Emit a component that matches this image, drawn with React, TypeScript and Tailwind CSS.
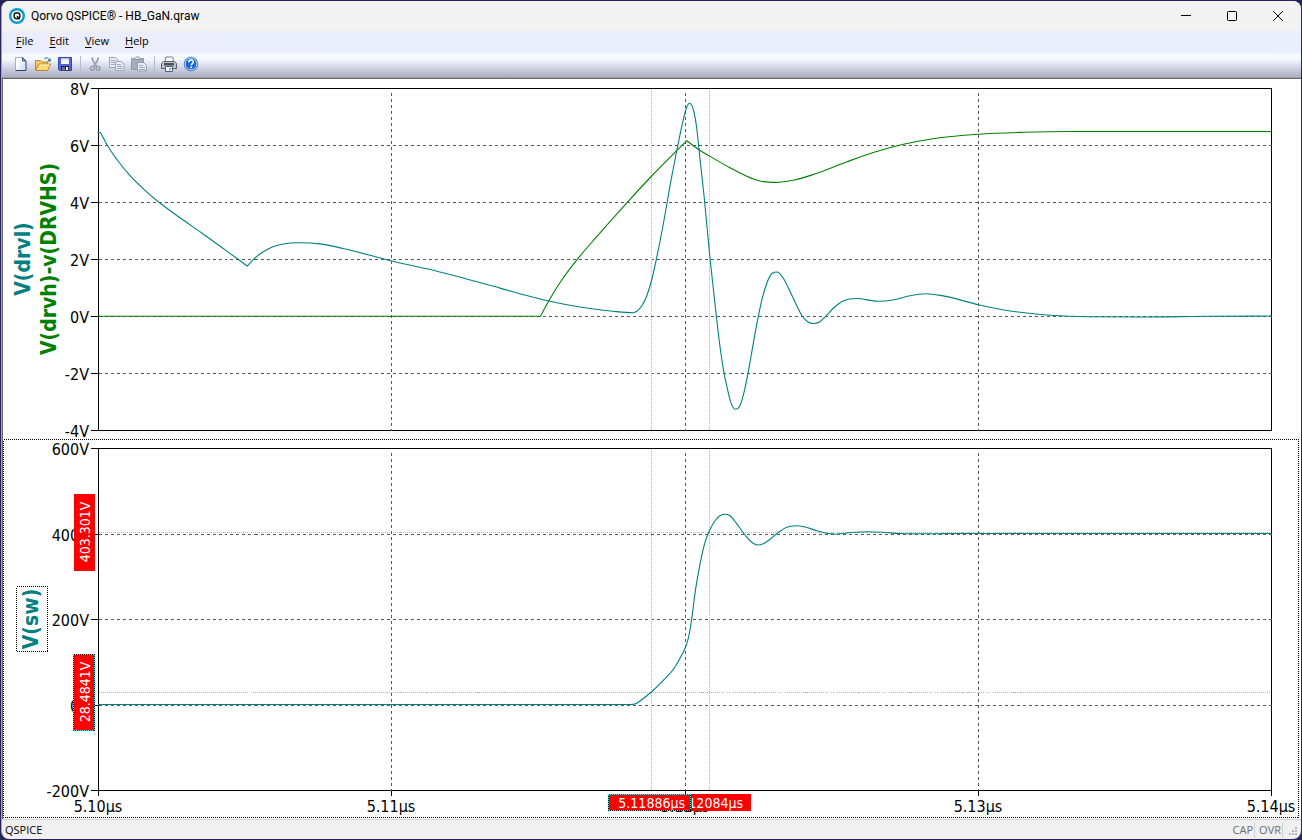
import React from "react";

type Point = [number, number];

/* Smooth path through a run of samples, with tangents limited so that it never overshoots. */
function curve(points: Point[], start = "M"): string {
  const n = points.length;
  const slope: number[] = [];
  for (let i = 0; i < n - 1; i++) {
    slope.push((points[i + 1][1] - points[i][1]) / (points[i + 1][0] - points[i][0]));
  }
  const tangent = points.map((_, i) => {
    if (i === 0) return slope[0];
    if (i === n - 1) return slope[n - 2];
    const a = slope[i - 1];
    const b = slope[i];
    if (a * b <= 0) return 0;
    const h0 = points[i][0] - points[i - 1][0];
    const h1 = points[i + 1][0] - points[i][0];
    const t = (a * h1 + b * h0) / (h0 + h1);
    const limit = 3 * Math.min(Math.abs(a), Math.abs(b));
    return Math.sign(t) * Math.min(Math.abs(t), limit);
  });
  let d = `${start}${points[0][0]} ${points[0][1]}`;
  for (let i = 0; i < n - 1; i++) {
    const [x0, y0] = points[i];
    const [x1, y1] = points[i + 1];
    const h = (x1 - x0) / 3;
    d += `C${x0 + h} ${y0 + tangent[i] * h} ${x1 - h} ${y1 - tangent[i + 1] * h} ${x1} ${y1}`;
  }
  return d;
}

const DRVL_DECAY: Point[] = [
  [100.7, 132.7], [107.3, 145.3], [117.3, 160], [130, 175.7], [145, 190.3], [159, 202.3],
  [180, 217.8], [201.7, 233], [236.7, 258.3], [247.3, 266],
];
const DRVL_RING: Point[] = [
  [247.3, 266], [253.3, 259.7], [261.7, 252.7], [271.7, 247.2], [283.3, 244], [298.3, 242.7],
  [320, 243.9], [343.3, 248.5], [391.7, 261], [438, 271.5], [488, 284.8], [520, 293.7],
  [548.7, 301], [580, 307], [613, 311.3], [633.3, 312.7], [636.7, 311.3], [641.7, 306],
  [646.7, 296], [651.7, 280], [656.7, 257.7], [663.3, 224], [671.7, 176.7], [676.7, 151],
  [682.7, 122.3], [686.7, 107.3], [689.5, 103.2], [693.7, 111], [696.7, 127.7], [699, 149.7],
  [704.3, 198.3], [710, 258.3], [716.3, 315.7], [720, 346.7], [724, 373], [727.3, 388.3],
  [730.3, 400.7], [735.3, 409.3], [739, 407.3], [744, 392.3], [748, 373.3], [753.3, 343.3],
  [758.3, 316.3], [762.7, 296.7], [767, 282.7], [772.3, 273.3], [777.3, 272], [784.2, 279.7],
  [790.4, 292.3], [796.3, 304.7], [802.2, 316], [807.7, 321.7], [813.6, 323.5], [819.5, 322],
  [825.7, 316.3], [833.6, 308], [841.2, 302], [849.2, 299], [856.8, 298.5], [877.5, 301.3],
  [893, 300], [908.6, 296], [925.9, 293.7], [943.2, 295.9], [978.5, 304.7], [1008.9, 310.7],
  [1053.8, 315.5], [1088.4, 316.8], [1140, 317], [1209, 316.3], [1271.5, 316],
];
const DRVH_RISE: Point[] = [
  [540.5, 316.2], [548.7, 301], [561.7, 280], [577.3, 259.3], [596.7, 236.7], [627.3, 202.3],
  [651.7, 176], [676.7, 150.7], [686.7, 140.7],
];
const DRVH_SETTLE: Point[] = [
  [686.7, 140.7], [699, 149.8], [709.3, 155.9], [730, 167.7], [746.7, 176.3], [760, 181],
  [774.5, 182.4], [794.6, 180], [815.3, 173.8], [846.4, 162], [874, 152.3], [903.4, 144.3],
  [932.8, 138.7], [978.5, 134.2], [1022.7, 132.3], [1071, 131.5], [1271.5, 131.5],
];
const SW: Point[] = [
  [98, 704.5], [630, 704.5], [635, 704], [641.7, 699.7], [651.3, 692], [663.3, 680.3],
  [675, 667], [681.7, 655], [685.7, 646.7], [688.7, 636.7], [691.7, 619], [695, 593.3],
  [700, 564.3], [704.7, 543.3], [709.3, 531], [715, 520.7], [720, 515.7], [725, 514.3],
  [730, 515.7], [736.7, 523.7], [745, 535], [751.7, 542.3], [757.7, 545], [763.3, 543.7],
  [770, 539.3], [779.3, 531.7], [786.7, 527.3], [796, 525.7], [805, 527], [816.7, 530.7],
  [826.7, 533.3], [835, 534], [846.7, 533], [866.7, 531.7], [883, 532.3], [900, 533.5],
  [930, 533.8], [960, 533.5], [1271.5, 533.5],
];

const TIME_GRID = [391, 685, 978];
const CURSORS = [651, 709];
const AXIS_TEXT = "fill-black text-[16px] font-['DejaVu_Sans_Condensed','DejaVu_Sans',sans-serif]";
const TRACE_TEXT = "text-[21px] font-bold font-['DejaVu_Sans_Condensed','DejaVu_Sans',sans-serif]";
const CURSOR_TEXT = "fill-white text-[14px] font-['DejaVu_Sans_Condensed','DejaVu_Sans',sans-serif]";

interface FrameProps {
  top: number;
  bottom: number;
  ticks: { y: number; label: string }[];
}

function PlotFrame({ top, bottom, ticks }: FrameProps) {
  return (
    <>
      <g transform="translate(0.5 0.5)" fill="none" shapeRendering="crispEdges">
        <rect x="98" y={top} width="1173" height={bottom - top} stroke="#000" />
        {ticks.map((t) => (
          <path key={t.label} d={`M90 ${t.y}H98`} stroke="#000" />
        ))}
        {ticks.slice(1, -1).map((t) => (
          <path key={t.label} d={`M98 ${t.y}H1271`} stroke="#585858" strokeDasharray="3 3" />
        ))}
        {TIME_GRID.map((x) => (
          <path key={x} d={`M${x} ${top + 4}V${bottom}`} stroke="#585858" strokeDasharray="3 3" />
        ))}
        {CURSORS.map((x) => (
          <path key={x} d={`M${x} ${top}V${bottom}`} stroke="#b4b4b4" strokeDasharray="1 1" />
        ))}
      </g>
      {ticks.map((t) => (
        <text key={t.label} x="89" y={t.y + 7} textAnchor="end" className={AXIS_TEXT}>
          {t.label}
        </text>
      ))}
    </>
  );
}

function DrivePane() {
  return (
    <svg
      viewBox="3 79 1297 360"
      className="block h-auto w-full overflow-visible"
      role="img"
      aria-label="Gate drive voltages"
    >
      <PlotFrame
        top={88}
        bottom={430}
        ticks={[
          { y: 88, label: "8V" },
          { y: 145, label: "6V" },
          { y: 202, label: "4V" },
          { y: 259, label: "2V" },
          { y: 316, label: "0V" },
          { y: 373, label: "-2V" },
          { y: 430, label: "-4V" },
        ]}
      />
      <path
        d={`M98 316.2${curve(DRVH_RISE, "L")}${curve(DRVH_SETTLE, "L")}`}
        fill="none"
        stroke="#008000"
        strokeWidth="1.1"
      />
      <path
        d={`M97.5 132.5${curve(DRVL_DECAY, "L")}${curve(DRVL_RING, "L")}`}
        fill="none"
        stroke="#008080"
        strokeWidth="1.1"
      />
      <text transform="translate(30 259) rotate(-90)" textAnchor="middle" fill="#008080" className={TRACE_TEXT}>
        V(drvl)
      </text>
      <text transform="translate(56 259) rotate(-90)" textAnchor="middle" fill="#008000" className={TRACE_TEXT}>
        V(drvh)-v(DRVHS)
      </text>
    </svg>
  );
}

function FocusRect({ x, y, width, height }: { x: number; y: number; width: number; height: number }) {
  return (
    <g transform="translate(0.5 0.5)" fill="none" shapeRendering="crispEdges">
      <rect x={x} y={y} width={width} height={height} stroke="#00ffff" />
      <rect x={x} y={y} width={width} height={height} stroke="#000" strokeDasharray="1 1" />
    </g>
  );
}

function SwitchPane() {
  return (
    <svg
      viewBox="3 439 1297 380"
      className="block h-auto w-full overflow-visible"
      role="img"
      aria-label="Switch node voltage"
    >
      <g transform="translate(0.5 0.5)" fill="none" shapeRendering="crispEdges" stroke="#000">
        <rect x="3" y="439" width="1295" height="378" strokeDasharray="1 1" />
        <rect x="16" y="586" width="31" height="65" strokeDasharray="1 1" />
        {[98, ...TIME_GRID, 1271].map((x) => (
          <path key={x} d={`M${x} 790V795`} />
        ))}
        <path d="M98 532H1271M98 692H1271" stroke="#b4b4b4" strokeDasharray="1 1" />
      </g>
      <PlotFrame
        top={448}
        bottom={790}
        ticks={[
          { y: 448, label: "600V" },
          { y: 534, label: "400V" },
          { y: 619, label: "200V" },
          { y: 705, label: "0V" },
          { y: 790, label: "-200V" },
        ]}
      />
      {["5.10µs", "5.11µs", "5.12µs", "5.13µs", "5.14µs"].map((label, i) => (
        <text key={label} x={[98, 391, 685, 978, 1271][i]} y="812" textAnchor="middle" className={AXIS_TEXT}>
          {label}
        </text>
      ))}
      <path d={curve(SW)} fill="none" stroke="#008080" strokeWidth="1.1" />
      <text transform="translate(38 619) rotate(-90)" textAnchor="middle" fill="#008080" className={TRACE_TEXT}>
        V(sw)
      </text>

      <rect x="74" y="494" width="21" height="77" fill="#ff0000" />
      <text transform="translate(90 532) rotate(-90)" textAnchor="middle" className={CURSOR_TEXT}>
        403.301V
      </text>
      <rect x="74" y="654" width="21" height="77" fill="#ff0000" />
      <text transform="translate(90 692) rotate(-90)" textAnchor="middle" className={CURSOR_TEXT}>
        28.4841V
      </text>
      <FocusRect x={73} y={654} width={21} height={76} />

      <rect x="668" y="794" width="83" height="17" fill="#ff0000" />
      <text x="743" y="808" textAnchor="end" className={CURSOR_TEXT}>
        5.12084µs
      </text>
      <rect x="608" y="794" width="84" height="17" fill="#ff0000" />
      <text x="685" y="808" textAnchor="end" className={CURSOR_TEXT}>
        5.11886µs
      </text>
      <FocusRect x={608} y={794} width={82} height={16} />
    </svg>
  );
}

function AppLogo() {
  return (
    <svg viewBox="0 0 16 16" className="size-4" aria-hidden="true">
      <circle cx="8" cy="8" r="8" fill="#0a9bd0" />
      <circle cx="8" cy="8" r="5.6" fill="#fff" />
      <circle cx="8" cy="7.8" r="3" fill="none" stroke="#111" strokeWidth="1.4" />
      <path d="M8 8l2.6 3.2" stroke="#111" strokeWidth="1.4" />
    </svg>
  );
}

function NewIcon() {
  return (
    <svg viewBox="0 0 16 16" className="size-4" aria-hidden="true">
      <defs>
        <linearGradient id="page" x1="0" y1="0" x2="1" y2="1">
          <stop offset="0.3" stopColor="#fff" />
          <stop offset="1" stopColor="#c3d6ee" />
        </linearGradient>
      </defs>
      <path d="M3 1.5h6.5l3.500 3.500v9.500H3z" fill="url(#page)" />
      <path d="M2.500 14V1.500h7" fill="none" stroke="#a3b4cc" />
      <path d="M9.500 1.500l3.500 3.500v9.500H2.500" fill="none" stroke="#2f4261" />
      <path d="M9.500 1.500V5H13z" fill="#8ba0bd" stroke="#2f4261" strokeWidth="0.8" />
    </svg>
  );
}

function OpenIcon() {
  return (
    <svg viewBox="0 0 16 16" className="size-4" aria-hidden="true">
      <path d="M0.500 14V4.500h5l1.500 1.500h5.500v3" fill="#f3cb60" stroke="#b98a2a" />
      <path d="M0.800 14.500l3-6.500h12l-3.300 6.500z" fill="#ffd978" stroke="#b98a2a" />
      <path d="M4.500 9h10" stroke="#fff1c0" />
      <path d="M9 3.200c1.500-2 4-2 5.300.6" fill="none" stroke="#41617f" />
      <path d="M15.600 2v3.500h-3.500z" fill="#41617f" />
    </svg>
  );
}

function SaveIcon() {
  return (
    <svg viewBox="0 0 16 16" className="size-4" aria-hidden="true">
      <path d="M1.500 1.500h13v13H2.500l-1-1z" fill="#5a62d8" stroke="#3a45a8" />
      <path d="M4 2h8v6H4z" fill="#f4f7ff" />
      <path d="M4 2h8v1.500H4z" fill="#b9c5f0" />
      <path d="M4 10h8v4.500H4z" fill="#20253e" />
      <path d="M9 11h2v3H9z" fill="#fff" />
      <path d="M5 11h3v3.500H5z" fill="#66709c" />
    </svg>
  );
}

function CutIcon() {
  return (
    <svg viewBox="0 0 16 16" className="size-4" fill="none" aria-hidden="true">
      <path d="M5 1.500l.8 3 3.700 6M11.300 1.500L10.500 4.500l-3.700 6" stroke="#9aa3b2" strokeWidth="1.8" />
      <circle cx="5.300" cy="12.300" r="1.9" stroke="#8f9aae" strokeWidth="1.4" />
      <circle cx="11" cy="12.300" r="1.9" stroke="#8f9aae" strokeWidth="1.4" />
    </svg>
  );
}

function CopyIcon() {
  return (
    <svg viewBox="0 0 16 16" className="size-4" aria-hidden="true">
      <g fill="#e8ecf4" stroke="#9ca7ba">
        <path d="M0.500 1.500h6l2.500 2.500v7.500H0.500z" />
        <path d="M2 4.500h4M2 6.500h5M2 8.500h5" />
        <path d="M6.500 5.500h6l2.500 2.500v6.500H6.500z" />
        <path d="M8 8.500h4M8 10.500h5.500M8 12.500h5.500" />
      </g>
    </svg>
  );
}

function PasteIcon() {
  return (
    <svg viewBox="0 0 16 16" className="size-4" aria-hidden="true">
      <path d="M0.500 2.500h12v11H0.500z" fill="#a9aebb" stroke="#9299a8" />
      <path d="M3.500 3.500v-1l2-1.500h2l2 1.500v1z" fill="#dde1e8" stroke="#8c93a3" />
      <path d="M6.500 6.500h6l3 3v5.500h-9z" fill="#e8ecf4" stroke="#929daf" />
      <path d="M8 9.500h4M8 11.500h6M8 13.500h6" stroke="#9ca7ba" />
    </svg>
  );
}

function PrintIcon() {
  return (
    <svg viewBox="0 0 16 16" className="size-4" aria-hidden="true">
      <path d="M4 6L4.800 1h7L12.500 6z" fill="#fff" stroke="#6c7686" strokeWidth="0.9" />
      <path d="M0.500 7.500l2-2h11l2 2v5h-15z" fill="#c0c4cc" stroke="#5a5f6a" />
      <path d="M3 7h10v2.500H3z" fill="#4a4f5a" />
      <path d="M4.500 10.500h7v5h-7z" fill="#f4faff" stroke="#4b535f" strokeWidth="0.9" />
      <path d="M8 12.500h2.500M8 14h2" stroke="#57a5d8" />
    </svg>
  );
}

function HelpIcon() {
  return (
    <svg viewBox="0 0 16 16" className="size-4" aria-hidden="true">
      <circle cx="8" cy="8" r="6.8" fill="#1c68d4" stroke="#2f6cc4" strokeWidth="0.8" />
      <circle cx="8" cy="8" r="5.9" fill="none" stroke="#dceaff" strokeWidth="0.9" />
      <path
        d="M5.800 6.300c0-3 4.600-2.900 4.600-.3 0 1.500-2.200 1.600-2.200 3.200"
        fill="none"
        stroke="#fff"
        strokeWidth="1.6"
      />
      <circle cx="8.200" cy="11.300" r="1" fill="#fff" />
    </svg>
  );
}

function ToolButton({ label, disabled, children }: { label: string; disabled?: boolean; children: React.ReactNode }) {
  return (
    <button type="button" aria-label={label} disabled={disabled} className="flex h-[22px] w-[22px] items-center justify-center">
      {children}
    </button>
  );
}

function Separator() {
  return <span className="mr-[3px] ml-1 mt-[3px] h-4 w-px bg-[#b9bdc9]" />;
}

const MENUS = ["File", "Edit", "View", "Help"];

export default function App() {
  return (
    <div className="min-h-screen bg-[#26265c] p-px font-['Open_Sans','Noto_Sans',sans-serif] text-black">
      <div className="overflow-hidden rounded-lg border-l border-[#a6a6a6] bg-[#f0f0f0]">
        <header className="flex h-[30px] items-center justify-between bg-[#f3f3f3]">
          <div className="flex items-center gap-[6px] pl-[7px]">
            <AppLogo />
            <h1 className="font-['Roboto','Open_Sans',sans-serif] text-[12px] leading-4">Qorvo QSPICE® - HB_GaN.qraw</h1>
          </div>
          <div className="flex">
            <button type="button" aria-label="Minimize" className="flex h-[30px] w-[46px] items-center justify-center">
              <svg viewBox="0 0 10 10" className="size-[10px]" aria-hidden="true">
                <path d="M0 4.500h10" stroke="#000" />
              </svg>
            </button>
            <button type="button" aria-label="Maximize" className="flex h-[30px] w-[46px] items-center justify-center">
              <svg viewBox="0 0 10 10" className="size-[10px]" aria-hidden="true">
                <rect x="0.500" y="0.500" width="9" height="9" rx="0.8" fill="none" stroke="#000" />
              </svg>
            </button>
            <button type="button" aria-label="Close" className="flex h-[30px] w-[46px] items-center justify-center">
              <svg viewBox="0 0 10 10" className="size-[10px]" aria-hidden="true">
                <path d="M0.200 0.200l9.600 9.600M9.800 0.200L0.200 9.800" stroke="#000" />
              </svg>
            </button>
          </div>
        </header>

        <nav className="flex h-[22px] items-start bg-linear-to-r from-[#ebedfb] to-[#e9effc] pt-px pl-[6px] text-[11px]">
          {MENUS.map((name) => (
            <button type="button" key={name} className="px-2 leading-[18px]">
              <span className="underline underline-offset-2">{name[0]}</span>
              {name.slice(1)}
            </button>
          ))}
        </nav>

        <div
          role="toolbar"
          aria-label="Standard"
          className="flex h-[24px] items-start bg-linear-to-b from-[#f5f9ff] from-25% to-[#b2b2ca] to-95% pl-2"
        >
          <ToolButton label="New"><NewIcon /></ToolButton>
          <ToolButton label="Open"><OpenIcon /></ToolButton>
          <ToolButton label="Save"><SaveIcon /></ToolButton>
          <Separator />
          <ToolButton label="Cut" disabled><CutIcon /></ToolButton>
          <ToolButton label="Copy" disabled><CopyIcon /></ToolButton>
          <ToolButton label="Paste" disabled><PasteIcon /></ToolButton>
          <Separator />
          <ToolButton label="Print"><PrintIcon /></ToolButton>
          <ToolButton label="Help"><HelpIcon /></ToolButton>
        </div>

        <main className="border-t border-[#a0a0a0]">
          <div className="border-t border-l border-[#696969] bg-white pr-px">
            <DrivePane />
            <SwitchPane />
          </div>
        </main>

        <footer className="flex h-5 items-center justify-between border-t border-[#d0d0d0] pt-px pl-[3px] text-[11px] leading-4">
          <span>QSPICE</span>
          <div className="flex items-center text-[#6d6d6d]">
            <span className="border-r border-[#d0d0d0] pr-px">CAP</span>
            <span className="border-r border-[#d0d0d0] pr-px pl-1">OVR</span>
            <svg viewBox="0 0 18 18" className="size-[18px]" fill="#b8b8b8" shapeRendering="crispEdges" aria-hidden="true">
              <path d="M12 6h2v2h-2zM9 9h2v2H9zM12 9h2v2h-2zM6 12h2v2H6zM9 12h2v2H9zM12 12h2v2h-2z" />
            </svg>
          </div>
        </footer>
      </div>
    </div>
  );
}
